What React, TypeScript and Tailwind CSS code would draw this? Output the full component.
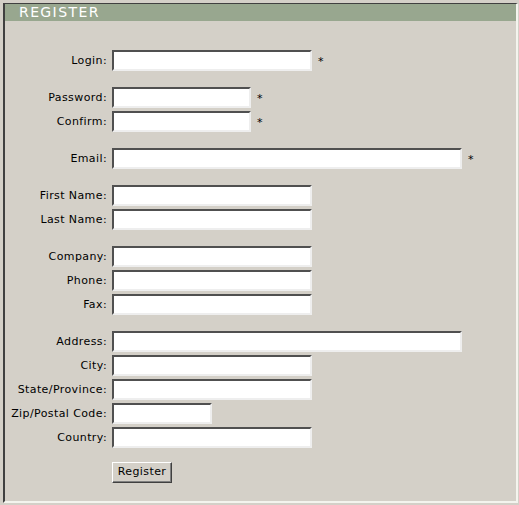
type Field = { label: string; width: string; required?: boolean };

const groups: Field[][] = [
  [{ label: "Login:", width: "w-[200px]", required: true }],
  [
    { label: "Password:", width: "w-[139px]", required: true },
    { label: "Confirm:", width: "w-[139px]", required: true },
  ],
  [{ label: "Email:", width: "w-[350px]", required: true }],
  [
    { label: "First Name:", width: "w-[200px]" },
    { label: "Last Name:", width: "w-[200px]" },
  ],
  [
    { label: "Company:", width: "w-[200px]" },
    { label: "Phone:", width: "w-[200px]" },
    { label: "Fax:", width: "w-[200px]" },
  ],
  [
    { label: "Address:", width: "w-[350px]" },
    { label: "City:", width: "w-[200px]" },
    { label: "State/Province:", width: "w-[200px]" },
    { label: "Zip/Postal Code:", width: "w-[100px]" },
    { label: "Country:", width: "w-[200px]" },
  ],
];

function Row({ field }: { field: Field }) {
  return (
    <div className="flex items-start h-[22px]">
      <label className="w-[107px] shrink-0 pr-[5px] text-right leading-[21px] tracking-[0.4px]">
        {field.label}
      </label>
      <input
        type="text"
        className={`${field.width} h-[21px] bg-white border-2 border-t-[#505050] border-l-[#505050] border-b-[#eeeeee] border-r-[#eeeeee] outline-none`}
      />
      {field.required && <span className="ml-[6px] leading-[23px]">*</span>}
    </div>
  );
}

export default function App() {
  return (
    <div className="w-[519px] h-[505px] bg-[#d4d0c8] pt-[3px] pl-[3px] pr-[1px] pb-[2px] font-['DejaVu_Sans',Verdana,sans-serif] text-[11px] text-black">
      <div className="h-full w-full border-2 border-t-[1px] border-t-[#404040] border-l-[#404040] border-b-[#f4f4ee] border-r-[#f4f4ee]">
        <div className="h-[17px] bg-[#98a78f] pl-[14px] text-[14px] leading-[17px] tracking-[1.4px] text-white">
          REGISTER
        </div>
        <form action="#" className="pt-[29px] flex flex-col gap-[15px]">
          {groups.map((g, i) => (
            <div key={i} className="flex flex-col gap-[2px]">
              {g.map((f) => (
                <Row key={f.label} field={f} />
              ))}
            </div>
          ))}
          <div className="pl-[107px] -mt-[2px]">
            <button
              type="button"
              className="w-[60px] h-[21px] bg-[#d4d0c8] border border-t-white border-l-white border-b-[#404040] border-r-[#404040] shadow-[inset_-1px_-1px_0_#808080] tracking-[0.4px]"
            >
              Register
            </button>
          </div>
        </form>
      </div>
    </div>
  );
}
